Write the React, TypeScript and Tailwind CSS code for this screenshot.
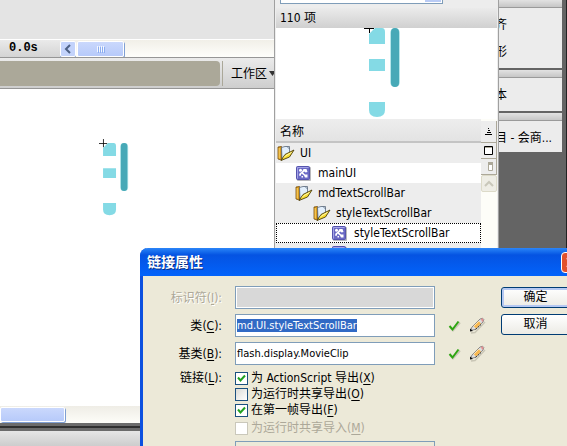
import { useEffect, useRef } from "react";
import type { ReactNode } from "react";

function FolderIcon() {
  return (
    <svg width="18" height="17" viewBox="0 0 18 17" className="shrink-0" aria-hidden="true">
      <path d="M1 2 4.500 1.500V15L1 14Z" fill="#d99a1c" stroke="#6e4a0c" strokeWidth="0.800" />
      <path d="M2.200 3v10.500" stroke="#ffd56b" strokeWidth="1" />
      <path d="M4.500 2.500 8 1.500 12.500 1.500V10L5 13.500Z" fill="#e2effc" stroke="#59677a" strokeWidth="0.800" />
      <path d="M10 1.500 12.500 4" stroke="#59677a" strokeWidth="0.800" />
      <path d="M4 15.500 8 9.500 17 5 12.500 12Z" fill="#f8dc2e" stroke="#4a3c0c" strokeWidth="0.900" />
      <path d="M7 12.500 9 10.500 14.500 7.500" stroke="#fff9b4" strokeWidth="1" fill="none" />
    </svg>
  );
}

function ClipIcon() {
  return (
    <svg width="15" height="15" viewBox="0 0 15 15" className="shrink-0" aria-hidden="true">
      <rect x="1" y="1" width="14" height="14" rx="1" fill="#b9b9bd" />
      <rect x="0.500" y="0.500" width="13" height="13" rx="1" fill="#6a69c4" stroke="#5554ad" />
      <path d="M1.500 12.500v-11h11" fill="none" stroke="#a3a2e6" />
      <circle cx="4.500" cy="4.200" r="1.500" fill="#fff" />
      <path d="M7.500 3H10.500L11.500 6 9.500 6.500 8.500 5.500 7 6.500 9 8.500 11.500 8.500V11.500H9L8 9.500 5.500 7.500 4.500 10 3 9.500 3.500 7.500 6 5.500Z" fill="#fff" />
      <rect x="5.500" y="10" width="1.500" height="1.500" fill="#fff" />
    </svg>
  );
}

function CheckIcon() {
  return (
    <svg width="14" height="14" viewBox="0 0 14 14" aria-hidden="true">
      <path d="M2.500 8.500 5 11.500 12 3.500" fill="none" stroke="#c9c6b6" strokeWidth="2" />
      <path d="M1.500 7 4.500 10.500 10.500 2.500" fill="none" stroke="#2ea512" strokeWidth="2" />
    </svg>
  );
}

function PencilIcon() {
  return (
    <svg width="17" height="17" viewBox="0 0 17 17" aria-hidden="true">
      <path d="M2 16 6 15.500 16 5" stroke="#c9c6b6" strokeWidth="1.500" fill="none" />
      <path d="M1.500 13.500 3 10 11 2 13.500 1.200 14.800 2.500 14 5 6 12.500Z" fill="#dedede" stroke="#8a8a8a" />
      <path d="M4.500 9 9.500 4 12 6.500 7 11.500Z" fill="#f8b850" />
      <path d="M5 9 10 4" stroke="#ffe4b0" />
      <path d="M11.800 1.800 14 1.500 14.500 3.500 13.200 5Z" fill="#e58f8f" />
      <path d="M6.500 12.500 12 7.500" fill="none" stroke="#333" strokeDasharray="2 1" />
      <path d="M1 14.500v-3L4 14Z" fill="#111" />
    </svg>
  );
}

function ScrollBarClip({ className }: { className: string }) {
  return (
    <svg viewBox="-5 -5 37 80" className={className} aria-hidden="true">
      <path d="M0 16V6L6 0H13Q16 0 16 4V16Z" fill="#84dae5" />
      <rect y="31" width="16" height="12" fill="#84dae5" />
      <path d="M0 74H16V82Q16 89 8 89T0 82Z" fill="#84dae5" />
      <rect x="21" width="10" height="59" rx="5" fill="#b5e6ea" />
      <rect x="22" width="8" height="59" rx="4" fill="#47a9b7" />
      <path d="M-5 0.500H5M0.500 -5V5" stroke="#000" fill="none" />
    </svg>
  );
}

function Workspace() {
  return (
    <main className="flex min-w-0 flex-1 flex-col bg-white">
      <div className="h-[39px] shrink-0 bg-[#e4e4e4]" />
      <div className="flex h-[18px] shrink-0 border-t border-white">
        <div className="w-[60px] bg-linear-to-b from-[#eaeaea] to-[#d4d4d4] pl-[9px] font-['Liberation_Mono',monospace] text-[12px] leading-4 font-bold">
          0.0s
        </div>
        <div className="flex flex-1 gap-px bg-linear-to-b from-[#f1efe8] to-[#fefefb] pt-px">
          <button
            aria-label="Scroll left"
            className="flex w-4 items-center justify-center rounded-xs border border-white bg-[#c3d3fb] shadow-[0_1px_0_#7f9fd3]"
          >
            <svg width="8" height="10" viewBox="0 0 8 10" aria-hidden="true">
              <path d="M6 1 2 5 6 9" fill="none" stroke="#4d6185" strokeWidth="2" />
            </svg>
          </button>
          <div className="flex w-[47px] items-center justify-center rounded-xs border border-white bg-linear-to-b from-[#cad8fc] to-[#b7cafa] shadow-[1px_1px_0_#7f9fd3]">
            <svg width="8" height="7" viewBox="0 0 8 7" aria-hidden="true">
              <path d="M0.500 0V6M2.500 0V6M4.500 0V6M6.500 0V6" stroke="#f4f8ff" />
              <path d="M1.500 1V7M3.500 1V7M5.500 1V7M7.500 1V7" stroke="#8cadf0" />
            </svg>
          </div>
        </div>
      </div>
      <div className="flex h-8 shrink-0 border-y border-[#969696] bg-linear-to-b from-[#ebebeb] to-[#cecece] pt-[3px] pb-[2px]">
        <div className="w-[220px] rounded-r bg-[#aba899]" />
        <div className="ml-[2px] w-px bg-[#aba899]" />
        <button className="ml-2 flex items-center gap-[2px] text-[12px]">
          工作区
          <svg width="7" height="5" viewBox="0 0 7 5" aria-hidden="true">
            <path d="M0 0H7L3.500 5Z" fill="#333" />
          </svg>
        </button>
      </div>
      <div className="flex-1 pt-[50px] pl-[99px]">
        <ScrollBarClip className="h-[65px] w-[30px] overflow-visible" />
      </div>
      <div className="h-[17px] shrink-0 bg-linear-to-b from-[#efede6] to-[#fdfdf8] py-px">
        <div className="h-full w-[65px] rounded-xs border border-white bg-linear-to-b from-[#cad8fc] to-[#b7cafa] shadow-[1px_1px_0_#7f9fd3]" />
      </div>
      <div className="h-2 shrink-0 border-y-3 border-[#6b6b6b] bg-[#2f2f2f]" />
      <div className="h-[15px] shrink-0 bg-linear-to-b from-[#e6e6e6] to-[#cdcdcd]" />
    </main>
  );
}

function DockPanel({ children }: { children: ReactNode }) {
  return (
    <section className="mb-[2px] bg-[#ececec]">
      <div className="h-2 border-b border-[#9a9a9a] bg-linear-to-b from-[#e2e2e2] to-[#c6c6c6]" />
      <div className="flex flex-col text-[12px] leading-[27px]">{children}</div>
    </section>
  );
}

function Dock() {
  return (
    <aside className="w-[68px] shrink-0 border-r border-[#222] bg-[#646464] pr-1">
      <DockPanel>
        <a href="#align" className="-ml-1 pt-1">齐</a>
        <a href="#shape" className="-ml-1 pb-[2px]">形</a>
      </DockPanel>
      <DockPanel>
        <a href="#text" className="-ml-1 pt-1 pb-[2px]">本</a>
      </DockPanel>
      <DockPanel>
        <a href="#project" className="-ml-1 pt-1 whitespace-nowrap">目 - 会商...</a>
      </DockPanel>
    </aside>
  );
}

const items = [
  { name: "UI", folder: true, indent: "pl-0", tone: "bg-[#ededed]" },
  { name: "mainUI", folder: false, indent: "pl-[18px]", tone: "bg-white" },
  { name: "mdTextScrollBar", folder: true, indent: "pl-[18px]", tone: "bg-[#ededed]" },
  { name: "styleTextScrollBar", folder: true, indent: "pl-[36px]", tone: "bg-[#ededed]" },
  { name: "styleTextScrollBar", folder: false, indent: "pl-[53px]", tone: "border border-dotted border-black bg-white" },
  { name: "", folder: false, indent: "pl-[54px]", tone: "bg-[#ededed]" },
];

function Library() {
  return (
    <section className="absolute inset-y-0 left-[274px] flex w-[225px] flex-col border-x border-[#a0a0a0] bg-[#ededed] px-px">
      <div className="ml-1 flex h-1 w-[163px] shrink-0 justify-end border border-t-0 border-[#7f9db9] bg-white pr-px">
        <div className="h-[2px] w-4 bg-[#b9cbf5]" />
      </div>
      <div className="mt-1 h-5 shrink-0 bg-linear-to-b from-[#ebebeb] to-[#d0d0d0] pl-1 text-[12px] leading-5">110 项</div>
      <div className="h-[90px] shrink-0 overflow-hidden bg-white pl-[88px]">
        <ScrollBarClip className="-mt-[5px] h-20 w-[37px] overflow-visible" />
      </div>
      <div className="flex min-h-0 flex-1 border-t border-white">
        <div className="min-w-0 flex-1">
          <div className="mt-px h-[23px] border-b-2 border-[#c4c4c4] bg-linear-to-b from-[#ededed] to-[#e3e3e3] pl-1 text-[12px] leading-6">
            名称
          </div>
          <ul>
            {items.map((item, index) => (
              <li key={index} className={`h-5 ${item.tone}`}>
                <div className={`flex h-full items-center text-[12px] whitespace-nowrap ${item.indent}`}>
                  <span className="flex w-6 shrink-0 justify-center pr-[5px]">
                    {item.folder ? <FolderIcon /> : <ClipIcon />}
                  </span>
                  {item.name}
                </div>
              </li>
            ))}
          </ul>
        </div>
        <div className="flex w-4 shrink-0 flex-col bg-[#fdfdf8]">
          <button aria-label="Sort" className="mt-[2px] flex h-[22px] items-center justify-center border-r border-b border-[#aca899] bg-[#ededed]">
            <svg width="8" height="8" viewBox="0 0 8 8" aria-hidden="true">
              <path d="M3 0.500H4M3 2.500H5M2 4.500H6M0 6.500H7" stroke="#000" />
            </svg>
          </button>
          <button aria-label="Wide view" className="flex h-4 items-center justify-center border-r border-b border-[#aca899] bg-[#ededed]">
            <svg width="9" height="9" viewBox="0 0 9 9" aria-hidden="true">
              <path d="M0.500 0.500H8.500V8.500H0.500Z" fill="#fff" stroke="#000" />
              <path d="M1 1.500H8" stroke="#aca899" />
            </svg>
          </button>
          <button aria-label="Narrow view" className="flex h-4 items-center justify-center border-r border-b border-[#aca899] bg-[#ededed] pl-1">
            <svg width="5" height="9" viewBox="0 0 5 9" aria-hidden="true">
              <path d="M0.500 0.500H4.500V8.500H0.500Z" fill="#fff" stroke="#aca899" />
              <path d="M0 1.500H5" stroke="#aca899" strokeWidth="3" />
            </svg>
          </button>
          <button aria-label="Scroll up" className="flex h-[17px] items-center justify-center rounded-xs border border-[#dcdac8] bg-[#eeede5]">
            <svg width="10" height="7" viewBox="0 0 10 7" aria-hidden="true">
              <path d="M1 6 5 2 9 6" fill="none" stroke="#c9c7ba" strokeWidth="2" />
            </svg>
          </button>
        </div>
      </div>
    </section>
  );
}

function Mnemonic({ letter }: { letter: string }) {
  return (
    <>
      (<u className="underline-offset-2">{letter}</u>)
    </>
  );
}

const rowLabel = "w-[79px] shrink-0 text-right whitespace-nowrap";
const textBox = "h-[23px] w-[200px] border border-[#7f9db9] px-px pb-px text-[11px]";

const options = [
  { id: "export-as", text: "为 ActionScript 导出", letter: "X", checked: true, disabled: false },
  { id: "export-shared", text: "为运行时共享导出", letter: "O", checked: false, disabled: false },
  { id: "export-frame", text: "在第一帧导出", letter: "F", checked: true, disabled: false },
  { id: "import-shared", text: "为运行时共享导入", letter: "M", checked: false, disabled: true },
];

function LinkageDialog() {
  const classRef = useRef<HTMLInputElement>(null);

  useEffect(() => {
    classRef.current?.focus();
    classRef.current?.select();
  }, []);

  return (
    <section
      role="dialog"
      aria-labelledby="dialog-title"
      className="absolute top-[248px] left-[140px] w-[446px] rounded-t-lg border-x-3 border-[#0c50e0] bg-[#ece9d8] pb-10"
    >
      <header className="-mx-[3px] flex h-7 items-center justify-between rounded-t-lg bg-linear-to-b from-[#2b85f8] via-[#0553e2] via-25% to-[#0263fb] pr-1 pl-[7px]">
        <h1 id="dialog-title" className="text-[14px] font-bold text-white [text-shadow:1px_1px_0_#0a2c80]">
          链接属性
        </h1>
        <button aria-label="Close" className="flex size-[21px] items-center justify-center rounded-sm border border-white bg-[#e2502d]">
          <svg width="11" height="11" viewBox="0 0 11 11" aria-hidden="true">
            <path d="M1 1 10 10M10 1 1 10" stroke="#fff" strokeWidth="2" />
          </svg>
        </button>
      </header>
      <form className="flex pt-[10px] text-[12px]">
        <div className="flex flex-1 flex-col gap-[5px]">
          <div className="flex items-center gap-[13px]">
            <label htmlFor="identifier" className={`${rowLabel} text-[#aca899] [text-shadow:1px_1px_0_#fff]`}>
              标识符<Mnemonic letter="I" />:
            </label>
            <input id="identifier" disabled className={`${textBox} bg-[#d8d8d8] shadow-[inset_0_0_0_1px_#fff]`} />
          </div>
          <div className="flex items-center gap-[13px]">
            <label htmlFor="class" className={rowLabel}>
              类<Mnemonic letter="C" />:
            </label>
            <input
              id="class"
              ref={classRef}
              defaultValue="md.UI.styleTextScrollBar"
              className={`${textBox} bg-white outline-none selection:bg-[#316ac5] selection:text-white`}
            />
            <div className="flex items-center gap-[7px]">
              <CheckIcon />
              <PencilIcon />
            </div>
          </div>
          <div className="flex items-center gap-[13px]">
            <label htmlFor="base-class" className={rowLabel}>
              基类<Mnemonic letter="B" />:
            </label>
            <input id="base-class" defaultValue="flash.display.MovieClip" className={`${textBox} bg-white`} />
            <div className="flex items-center gap-[7px]">
              <CheckIcon />
              <PencilIcon />
            </div>
          </div>
          <div role="group" aria-labelledby="linkage" className="flex gap-[13px]">
            <span id="linkage" className={`${rowLabel} leading-4`}>
              链接<Mnemonic letter="L" />:
            </span>
            <div className="flex flex-col">
              {options.map((option) => (
                <div key={option.id} className="flex h-4 items-center gap-[3px] last:mt-[2px]">
                  <span className="relative flex size-[13px]">
                    <input
                      id={option.id}
                      type="checkbox"
                      defaultChecked={option.checked}
                      disabled={option.disabled}
                      className="peer size-[13px] appearance-none border border-[#1c5180] bg-linear-to-br from-[#dcdcd7] to-white checked:from-white disabled:border-[#cac8bb] disabled:from-white"
                    />
                    <svg width="13" height="13" viewBox="0 0 13 13" className="pointer-events-none absolute inset-0 hidden peer-checked:block" aria-hidden="true">
                      <path d="M3 5.500 5.500 8.500 10 3.500" fill="none" stroke="#21a121" strokeWidth="2" />
                    </svg>
                  </span>
                  <label
                    htmlFor={option.id}
                    className={`leading-4 whitespace-nowrap ${option.disabled ? "text-[#aca899]" : "text-black"}`}
                  >
                    {option.text}
                    <Mnemonic letter={option.letter} />
                  </label>
                </div>
              ))}
            </div>
          </div>
          <div className="flex items-center gap-[13px]">
            <label htmlFor="url" className={`${rowLabel} text-[#aca899]`}>
              URL:
            </label>
            <input id="url" disabled className={textBox} />
          </div>
        </div>
        <div className="mr-[13px] flex w-[69px] flex-col gap-[6px] pt-px">
          <button
            type="submit"
            className="h-[21px] rounded-[3px] border border-[#003c74] bg-linear-to-b from-white to-[#ecebe5] leading-[19px] shadow-[inset_0_0_0_2px_#b5c8f2]"
          >
            确定
          </button>
          <button
            type="button"
            className="h-[21px] rounded-[3px] border border-[#003c74] bg-linear-to-b from-white to-[#ecebe5] leading-[19px]"
          >
            取消
          </button>
        </div>
      </form>
    </section>
  );
}

export default function App() {
  return (
    <div className="relative flex h-screen overflow-hidden bg-white font-['DejaVu_Sans_Condensed','Noto_Sans_CJK_SC',sans-serif] text-black">
      <Workspace />
      <Dock />
      <Library />
      <LinkageDialog />
    </div>
  );
}
